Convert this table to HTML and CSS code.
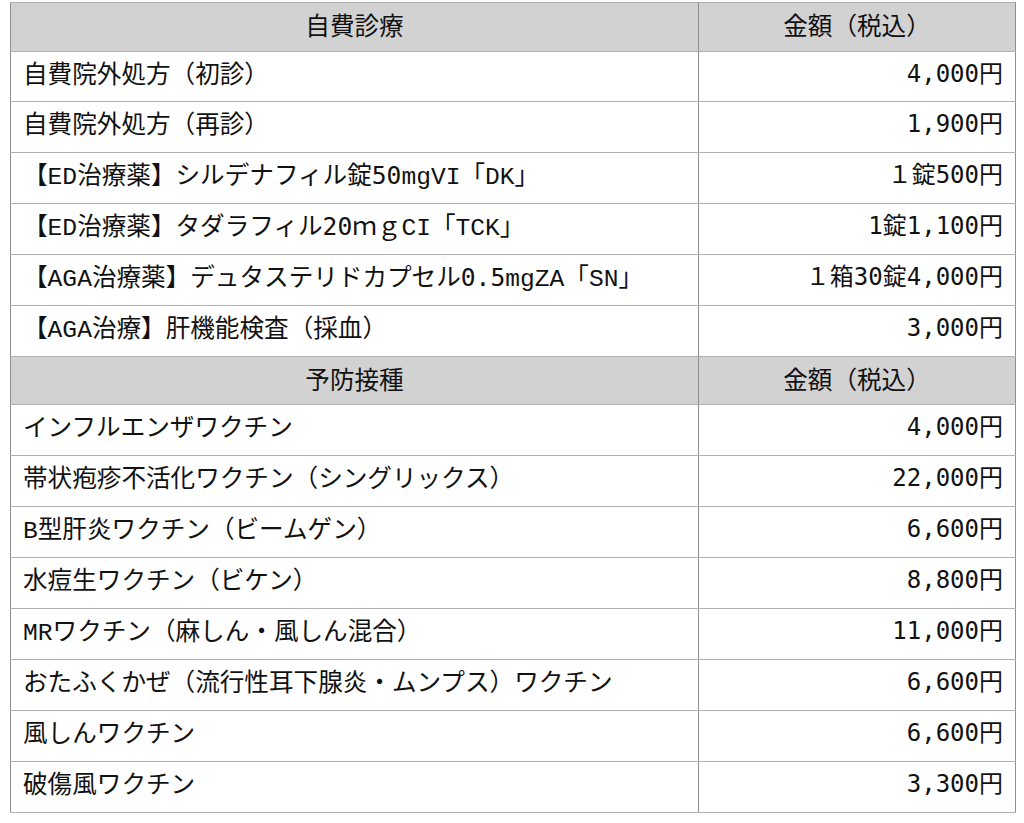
FILE: index.html
```html
<!DOCTYPE html>
<html lang="ja">
<head>
<meta charset="utf-8">
<title>料金表</title>
<link rel="stylesheet" href="styles.css">
</head>
<body>
<table class="price-table">
  <tbody>
    <tr class="head"><th>自費診療</th><th class="amount-head">金額（税込）</th></tr>
    <tr><td class="name">自費院外処方（初診）</td><td class="price">4,000円</td></tr>
    <tr><td class="name">自費院外処方（再診）</td><td class="price">1,900円</td></tr>
    <tr><td class="name">【<span class="lat">ED</span>治療薬】シルデナフィル錠50<span class="lat">mgVI</span>「<span class="lat">DK</span>」</td><td class="price">１錠500円</td></tr>
    <tr><td class="name">【<span class="lat">ED</span>治療薬】タダラフィル20ｍｇ<span class="lat">CI</span>「<span class="lat">TCK</span>」</td><td class="price">1錠1,100円</td></tr>
    <tr><td class="name">【<span class="lat">AGA</span>治療薬】デュタステリドカプセル0.5<span class="lat">mgZA</span>「<span class="lat">SN</span>」</td><td class="price">１箱30錠4,000円</td></tr>
    <tr><td class="name">【<span class="lat">AGA</span>治療】肝機能検査（採血）</td><td class="price">3,000円</td></tr>
    <tr class="head"><th>予防接種</th><th class="amount-head">金額（税込）</th></tr>
    <tr><td class="name">インフルエンザワクチン</td><td class="price">4,000円</td></tr>
    <tr><td class="name">帯状疱疹不活化ワクチン（シングリックス）</td><td class="price">22,000円</td></tr>
    <tr><td class="name"><span class="lat">B</span>型肝炎ワクチン（ビームゲン）</td><td class="price">6,600円</td></tr>
    <tr><td class="name">水痘生ワクチン（ビケン）</td><td class="price">8,800円</td></tr>
    <tr><td class="name"><span class="lat">MR</span>ワクチン（麻しん・風しん混合）</td><td class="price">11,000円</td></tr>
    <tr><td class="name">おたふくかぜ（流行性耳下腺炎・ムンプス）ワクチン</td><td class="price">6,600円</td></tr>
    <tr><td class="name">風しんワクチン</td><td class="price">6,600円</td></tr>
    <tr><td class="name">破傷風ワクチン</td><td class="price">3,300円</td></tr>
  </tbody>
</table>
</body>
</html>
```
FILE: styles.css
```css
html, body {
  background: #ffffff;
}
body {
  margin: 2px 8px 0 10px;
  color: #111111;
}
.price-table {
  width: 1006px;
  border-collapse: collapse;
  border: 1px solid #8e8e8e;
  table-layout: fixed;
}
.price-table th,
.price-table td {
  font-size: 24.6px;
  line-height: 29.9px;
  padding: 8px 12px 12px;
  border-top: 1px solid #b0b0b0;
  border-bottom: 1px solid #b0b0b0;
  border-left: 1px solid #8e8e8e;
  border-right: 1px solid #8e8e8e;
  white-space: nowrap;
}
.price-table th {
  background: #d3d2d3;
  font-family: "Noto Sans CJK JP", sans-serif;
  font-weight: 400;
  text-align: center;
  line-height: 27.5px;
}
.price-table th.amount-head {
  width: 292px;
}
.name {
  font-family: "DejaVu Sans Mono", "Noto Sans CJK JP", monospace;
  text-align: left;
}
.name .lat {
  font-family: "Liberation Mono", "DejaVu Sans Mono", monospace;
  line-height: 0;
}
.price-table td.price {
  font-family: "DejaVu Sans Mono", "Noto Sans CJK JP", monospace;
  font-size: 24px;
  text-align: right;
}
```
